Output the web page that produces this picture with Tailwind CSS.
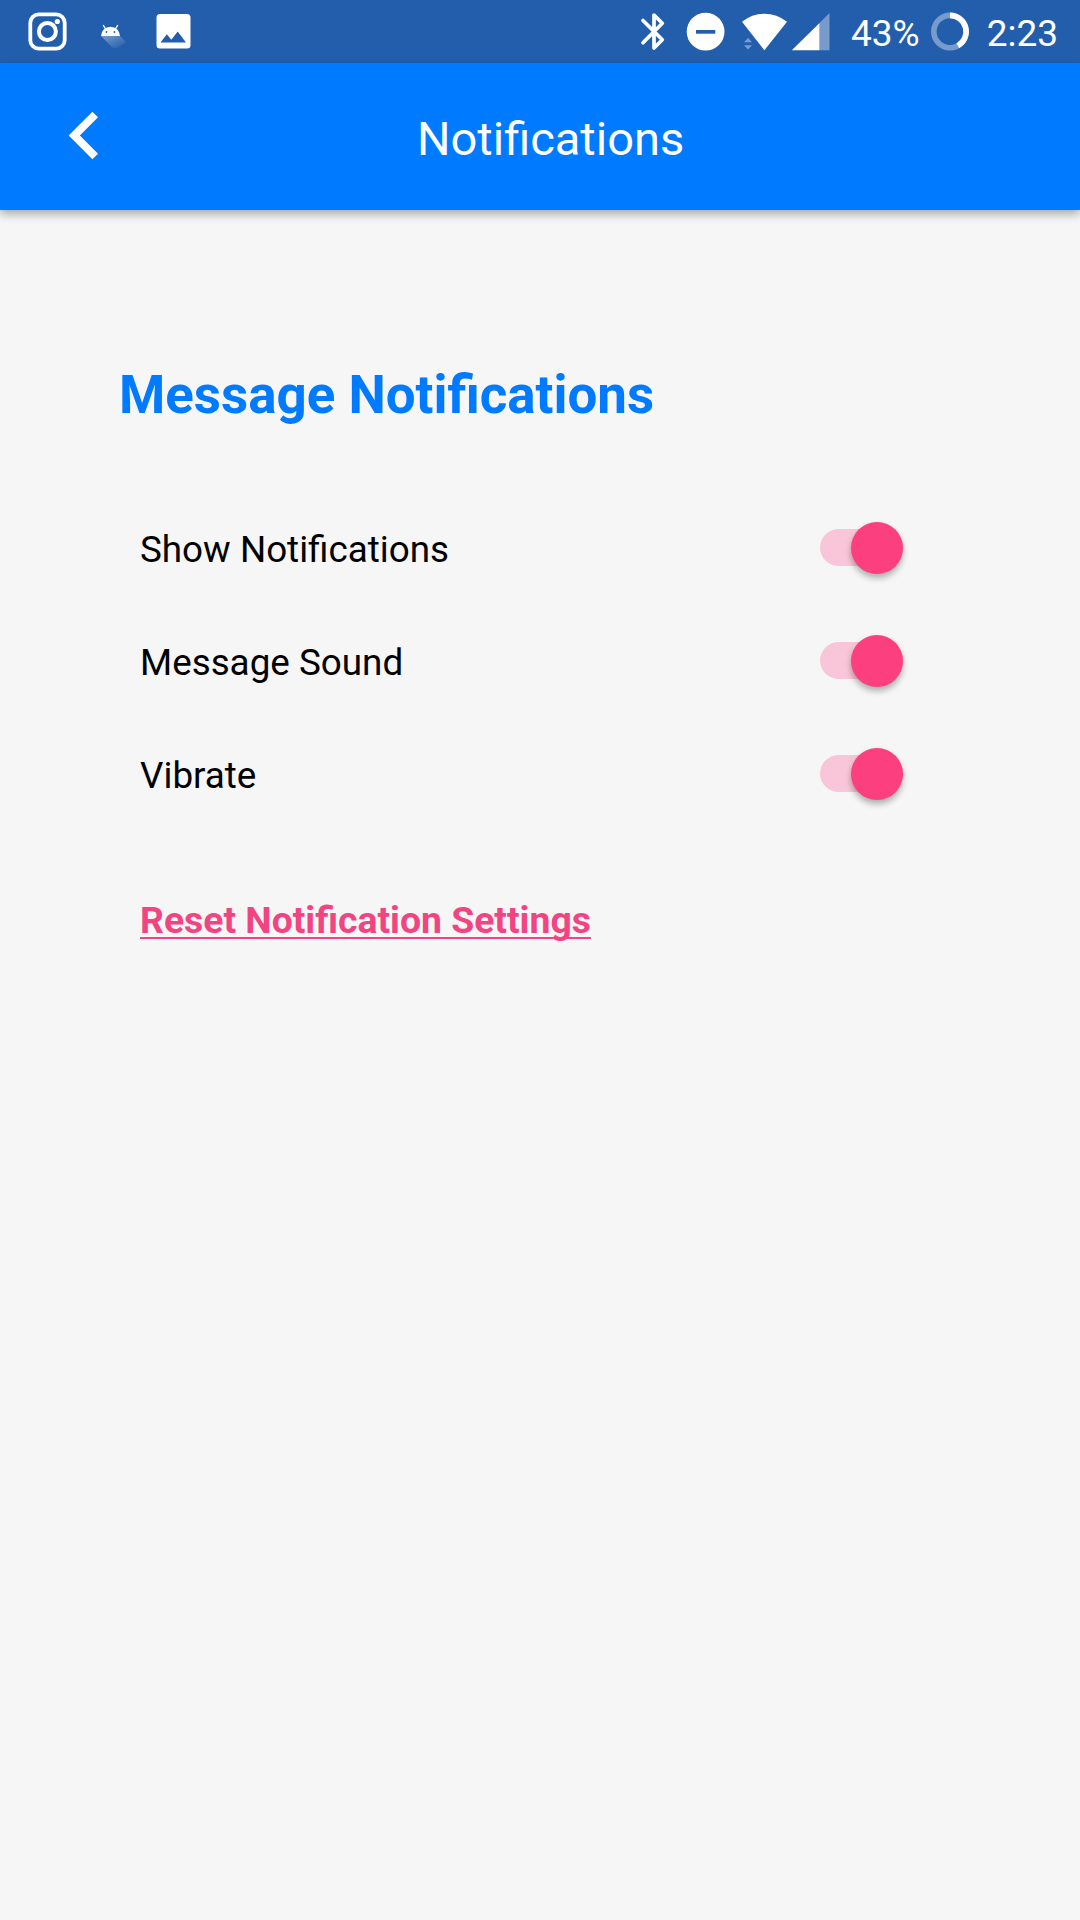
<!DOCTYPE html>
<html lang="en">
<head>
<meta charset="utf-8">
<title>Notifications</title>
<script src="https://cdn.jsdelivr.net/npm/@tailwindcss/browser@4"></script>
</head>
<body class="flex h-[1920px] w-[1080px] flex-col overflow-hidden bg-[#f6f6f6] font-[Roboto,sans-serif] text-black">
  <!-- Status bar -->
  <div class="flex h-[63px] shrink-0 items-center justify-between bg-[#235ead] text-white">
    <svg class="h-[63px] w-[200px]" viewBox="0 0 200 63" fill="none">
      <defs><linearGradient id="fade" x1="0" y1="0" x2="1" y2="1"><stop offset="0.1" stop-color="#fff" stop-opacity=".35"/><stop offset=".9" stop-color="#fff" stop-opacity="0.02"/></linearGradient></defs>
      <rect x="30.3" y="14.3" width="34.4" height="34.4" rx="8.5" stroke="#fff" stroke-width="3.8"/>
      <circle cx="47.4" cy="31.5" r="8.5" stroke="#fff" stroke-width="4"/>
      <circle cx="57.3" cy="21.5" r="2.6" fill="#fff"/>
      <path d="M101 36h19l6 6-8 6h-5z" fill="url(#fade)"/>
      <path d="M101 36a9.5 9.2 0 0 1 19 0z" fill="#fff"/>
      <path d="M105.500 29l-2.300-4M115.500 29l2.300-4" stroke="#fff" stroke-width="1.4"/>
      <circle cx="106.500" cy="32" r=".9" fill="#235ead"/><circle cx="114.500" cy="32" r=".9" fill="#235ead"/>
      <path fill-rule="evenodd" d="M160 14h27a3.500 3.500 0 0 1 3.500 3.500v27.500a3.500 3.500 0 0 1-3.500 3.500h-27a3.500 3.500 0 0 1-3.500-3.500v-27.500a3.500 3.500 0 0 1 3.500-3.500zM160.500 42.500h25.500l-8.300-11-6.400 8.200-4.500-5.500z" fill="#fff"/>
    </svg>
    <div class="flex items-center pr-[22px]">
      <svg class="h-[63px] w-[210px]" viewBox="630 0 210 63" fill="none">
        <path d="M643 20.500l19.300 19.300-8.300 8.200v-33l8.300 8.200-19.300 19.600" stroke="#fff" stroke-width="3.7" stroke-linecap="round" stroke-linejoin="round"/>
        <circle cx="705.600" cy="31.700" r="18.900" fill="#fff"/>
        <path d="M696 30h19.300v3.700h-19.300z" fill="#235ead"/>
        <path d="M742 21.700Q752 13.700 764.400 13.700T787 21.700L764.400 50.300z" fill="#fff"/>
        <path d="M744 42.200l4-4.200 4 4.200zM744 45.300h8l-4 4.200z" fill="#fff" fill-opacity=".4"/>
        <path d="M829.500 13v37.300h-11v-26.300z" fill="#fff" fill-opacity=".38"/>
        <path d="M819.300 23.200v27.100h-27.500z" fill="#fff"/>
      </svg>
      <span class="ml-[11px] pt-1 text-[37px] leading-[44px]">43%</span>
      <svg class="ml-[10px] size-10" viewBox="0 0 40 40" fill="none">
        <circle cx="20" cy="19.600" r="16.200" stroke="#fff" stroke-opacity=".38" stroke-width="5.600"/>
        <path d="M20 3.400a16.200 16.200 0 0 1 7.900 30.300" stroke="#fff" stroke-width="5.600"/>
      </svg>
      <span class="ml-[17px] pt-1 text-[37px] leading-[44px]">2:23</span>
    </div>
  </div>
  <!-- App bar -->
  <header class="flex h-[147px] shrink-0 items-center bg-[#007aff] text-white shadow-[0_4px_9px_rgba(0,0,0,0.32)]">
    <svg class="mb-[3px] ml-[37px] size-[95px]" viewBox="0 0 24 24" fill="#fff"><path d="M15.410 16.580L10.830 12l4.580-4.590L14 6l-6 6 6 6z"/></svg>
    <h1 class="ml-[285px] mt-1 text-[47px] leading-[56px]">Notifications</h1>
  </header>
  <main class="px-[119px] pt-[153px]">
    <h2 class="text-[52.9px] font-bold leading-[64px] text-[#007aff]">Message Notifications</h2>
    <div class="mt-[66px] flex flex-col pl-[21px] text-[36.8px]">
      <div class="flex h-[113px] w-[763px] items-center justify-between">
        <span>Show Notifications</span>
        <div class="mb-[4px] flex h-[37px] w-[83px] items-center justify-end rounded-full bg-[#f8c6d8]"><div class="mr-[0.5px] size-[52px] shrink-0 rounded-full bg-[#fc3f7f] shadow-[0_4px_6px_rgba(0,0,0,0.3)]"></div></div>
      </div>
      <div class="flex h-[113px] w-[763px] items-center justify-between">
        <span>Message Sound</span>
        <div class="mb-[4px] flex h-[37px] w-[83px] items-center justify-end rounded-full bg-[#f8c6d8]"><div class="mr-[0.5px] size-[52px] shrink-0 rounded-full bg-[#fc3f7f] shadow-[0_4px_6px_rgba(0,0,0,0.3)]"></div></div>
      </div>
      <div class="flex h-[113px] w-[763px] items-center justify-between">
        <span>Vibrate</span>
        <div class="mb-[4px] flex h-[37px] w-[83px] items-center justify-end rounded-full bg-[#f8c6d8]"><div class="mr-[0.5px] size-[52px] shrink-0 rounded-full bg-[#fc3f7f] shadow-[0_4px_6px_rgba(0,0,0,0.3)]"></div></div>
      </div>
      <a class="mt-[66px] self-start text-[37.35px] font-bold leading-[44px] text-[#f34482] underline decoration-2 underline-offset-[4px] [text-decoration-skip-ink:none]">Reset Notification Settings</a>
    </div>
  </main>
</body>
</html>
